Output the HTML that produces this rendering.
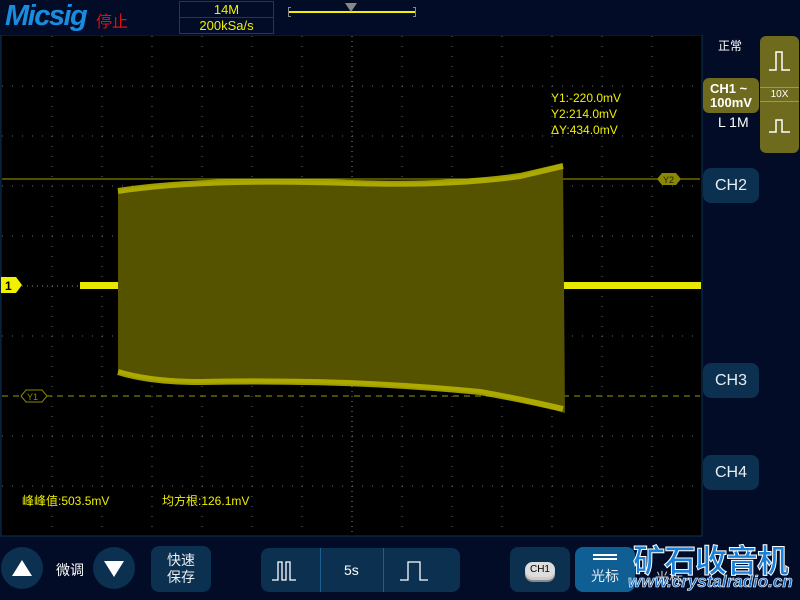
<!DOCTYPE html>
<html><head><meta charset="utf-8"><style>
*{margin:0;padding:0;box-sizing:border-box}
body{width:800px;height:600px;background:#020c26;font-family:"Liberation Sans","Noto Sans CJK SC",sans-serif;position:relative;overflow:hidden;color:#fff}
.a{position:absolute}
.btn{position:absolute;background:#0b3050;border-radius:8px;color:#e8eef4;display:flex;align-items:center;justify-content:center;font-size:16px}
.circ{position:absolute;width:42px;height:42px;border-radius:50%;background:#0b3050}
</style></head><body>
<div class="a" style="left:5px;top:0px;font:italic bold 29px 'Liberation Sans',sans-serif;color:#1a8ce0;letter-spacing:-1.5px">Micsig</div>
<div class="a" style="left:96px;top:8px;font-size:16px;color:#e01010">停止</div>
<div class="a" style="left:179px;top:1px;width:95px;height:33px;border:1px solid #1c3a5c"></div>
<div class="a" style="left:179px;top:17px;width:95px;height:1px;background:#1c3a5c"></div>
<div class="a" style="left:179px;top:2px;width:95px;text-align:center;font-size:13px;color:#f0f000">14M</div>
<div class="a" style="left:179px;top:18px;width:95px;text-align:center;font-size:13px;color:#f0f000">200kSa/s</div>
<div class="a" style="left:289px;top:11px;width:126px;height:2px;background:#f0f000"></div>
<div class="a" style="left:288px;top:7px;width:3px;height:10px;border:1px solid #888;border-right:none"></div>
<div class="a" style="left:413px;top:7px;width:3px;height:10px;border:1px solid #888;border-left:none"></div>
<div class="a" style="left:345px;top:3px;width:0;height:0;border-left:6px solid transparent;border-right:6px solid transparent;border-top:9px solid #888"></div>
<svg class="a" style="left:0;top:35px" width="703" height="502">
<rect x="1" y="0" width="701" height="501" fill="#000" stroke="#0e3450" stroke-width="1"/>
<g stroke="#6a6a6a" stroke-width="1" stroke-dasharray="1 9">
<line x1="52" y1="1" x2="52" y2="500"/><line x1="102" y1="1" x2="102" y2="500"/><line x1="152" y1="1" x2="152" y2="500"/><line x1="202" y1="1" x2="202" y2="500"/><line x1="252" y1="1" x2="252" y2="500"/><line x1="302" y1="1" x2="302" y2="500"/><line x1="402" y1="1" x2="402" y2="500"/><line x1="452" y1="1" x2="452" y2="500"/><line x1="502" y1="1" x2="502" y2="500"/><line x1="552" y1="1" x2="552" y2="500"/><line x1="602" y1="1" x2="602" y2="500"/><line x1="652" y1="1" x2="652" y2="500"/>
<line x1="2" y1="51" x2="700" y2="51"/><line x1="2" y1="101" x2="700" y2="101"/><line x1="2" y1="151" x2="700" y2="151"/><line x1="2" y1="201" x2="700" y2="201"/><line x1="2" y1="301" x2="700" y2="301"/><line x1="2" y1="401" x2="700" y2="401"/><line x1="2" y1="451" x2="700" y2="451"/>
</g>
<g stroke="#888" stroke-width="1" stroke-dasharray="1 4">
<line x1="352" y1="1" x2="352" y2="500"/><line x1="2" y1="251" x2="700" y2="251"/>
</g>
<line x1="2" y1="144" x2="700" y2="144" stroke="#a0a000" stroke-width="1"/>
<line x1="2" y1="361" x2="700" y2="361" stroke="#9a9a00" stroke-width="1" stroke-dasharray="6 5"/>
<rect x="80" y="247" width="38" height="7" fill="#e8e800"/>
<rect x="563" y="247" width="138" height="7" fill="#e8e800"/>
<path d="M118 155 Q200 142 350 147 Q450 150 520 140 L563 128 L565 378 Q520 365 480 358 Q350 345 200 348 Q150 348 118 338 Z" fill="#555300"/>
<path d="M118 156 Q200 143 350 148 Q450 151 520 141 L563 131" fill="none" stroke="#bcb800" stroke-width="6" opacity="0.85"/>
<path d="M118 337 Q150 347 200 347 Q350 344 480 357 Q520 364 563 374" fill="none" stroke="#bcb800" stroke-width="6" opacity="0.85"/>
<polygon points="657,144 662,138 676,138 681,144 676,150 662,150" fill="#8a8800"/>
<text x="663" y="148" font-size="9" fill="#222" font-family="Liberation Sans">Y2</text>
<polygon points="21,361 26,355 42,355 47,361 42,367 26,367" fill="#000" stroke="#8a8800"/>
<text x="27" y="365" font-size="9" fill="#8a8800" font-family="Liberation Sans">Y1</text>
<polygon points="1,242 16,242 22,250 16,258 1,258" fill="#f0f000"/>
<text x="5" y="255" font-size="12" font-weight="bold" fill="#000" font-family="Liberation Sans">1</text>
<g font-size="12" fill="#f0f000" font-family="Liberation Sans">
<text x="551" y="67">Y1:-220.0mV</text><text x="551" y="83">Y2:214.0mV</text><text x="551" y="99">ΔY:434.0mV</text>
<text x="22" y="470" font-family="Liberation Sans,Noto Sans CJK SC">峰峰值:503.5mV</text>
<text x="162" y="470" font-family="Liberation Sans,Noto Sans CJK SC">均方根:126.1mV</text>
</g>
</svg>
<div class="a" style="left:718px;top:37px;font-size:12px">正常</div>
<div class="a" style="left:760px;top:36px;width:39px;height:117px;background:#6e6a1e;border-radius:6px"></div>
<div class="a" style="left:760px;top:87px;width:39px;height:1px;background:#a09a40"></div>
<div class="a" style="left:760px;top:101px;width:39px;height:1px;background:#a09a40"></div>
<div class="a" style="left:760px;top:89px;width:39px;text-align:center;font-size:10px">10X</div>
<svg class="a" style="left:768px;top:50px" width="24" height="90"><path d="M1 20 H8 V2 H14 V20 H22" fill="none" stroke="#fff" stroke-width="1.5"/><path d="M1 82 H8 V70 H14 V82 H22" fill="none" stroke="#fff" stroke-width="1.5"/></svg>
<div class="a" style="left:703px;top:78px;width:56px;height:35px;background:#6e6a1e;border-radius:6px;font-weight:bold;font-size:13px;line-height:14px;padding:4px 0 0 7px">CH1 ~<br>100mV</div>
<div class="a" style="left:718px;top:114px;font-size:14px">L 1M</div>
<div class="btn" style="left:703px;top:168px;width:56px;height:35px">CH2</div>
<div class="btn" style="left:703px;top:363px;width:56px;height:35px">CH3</div>
<div class="btn" style="left:703px;top:455px;width:56px;height:35px">CH4</div>
<div class="circ" style="left:1px;top:547px"></div>
<div class="a" style="left:12px;top:560px;border-left:10px solid transparent;border-right:10px solid transparent;border-bottom:16px solid #fff"></div>
<div class="a" style="left:56px;top:560px;font-size:14px">微调</div>
<div class="circ" style="left:93px;top:547px"></div>
<div class="a" style="left:104px;top:561px;border-left:10px solid transparent;border-right:10px solid transparent;border-top:16px solid #fff"></div>
<div class="btn" style="left:151px;top:546px;width:60px;height:46px;font-size:14px;line-height:17px;text-align:center">快速<br>保存</div>
<div class="btn" style="left:261px;top:548px;width:199px;height:44px"></div>
<div class="a" style="left:320px;top:548px;width:1px;height:44px;background:#1a6090"></div>
<div class="a" style="left:383px;top:548px;width:1px;height:44px;background:#1a6090"></div>
<div class="a" style="left:344px;top:562px;font-size:14px">5s</div>
<svg class="a" style="left:270px;top:556px" width="190" height="30"><path d="M2 24 H8 V6 H12 V24 H16 V6 H20 V24 H26" fill="none" stroke="#fff" stroke-width="1.3"/><path d="M130 24 H138 V6 H150 V24 H158" fill="none" stroke="#fff" stroke-width="1.3"/></svg>
<div class="btn" style="left:510px;top:547px;width:60px;height:45px"><div style="background:#ddd;color:#000;border-radius:8px;font-size:10px;padding:2px 5px;box-shadow:0 3px 0 #ccc,0 5px 0 #888">CH1</div></div>
<div class="btn" style="left:575px;top:547px;width:60px;height:45px;background:#0f5f94;flex-direction:column;font-size:14px"><div style="width:24px;height:6px;border-top:2px solid #fff;border-bottom:2px solid #fff;margin-bottom:6px"></div>光标</div>
<div class="a" style="left:655px;top:568px;font-size:14px;color:#ccc">光标</div>
<div class="a" style="left:633px;top:536px;font:bold 32px 'Noto Sans CJK SC',sans-serif;color:#1a80d8;-webkit-text-stroke:1px #fff;letter-spacing:-1px">矿石收音机</div>
<div class="a" style="left:628px;top:572px;font:italic bold 17px 'Liberation Sans',sans-serif;color:#1a6ac0;-webkit-text-stroke:0.6px #fff">www.crystalradio.cn</div>
</body></html>
